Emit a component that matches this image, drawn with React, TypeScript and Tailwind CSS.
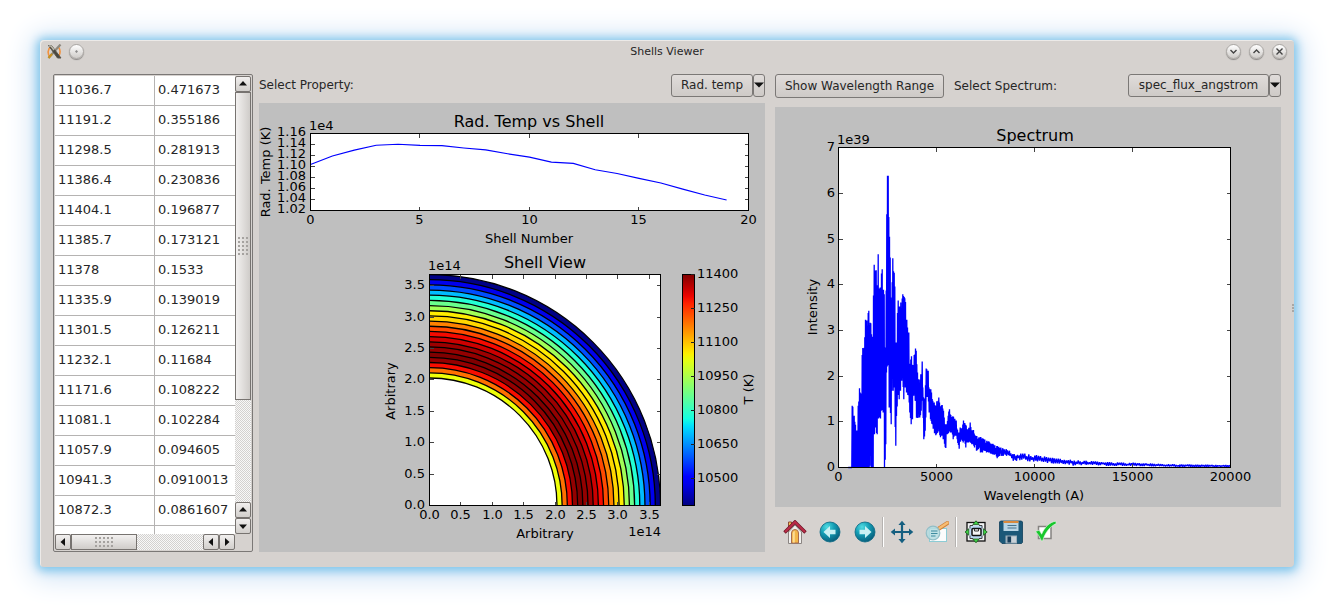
import type { ReactNode } from 'react';

const rows = [
  ['11036.7', '0.471673'],
  ['11191.2', '0.355186'],
  ['11298.5', '0.281913'],
  ['11386.4', '0.230836'],
  ['11404.1', '0.196877'],
  ['11385.7', '0.173121'],
  ['11378', '0.1533'],
  ['11335.9', '0.139019'],
  ['11301.5', '0.126211'],
  ['11232.1', '0.11684'],
  ['11171.6', '0.108222'],
  ['11081.1', '0.102284'],
  ['11057.9', '0.094605'],
  ['10941.3', '0.0910013'],
  ['10872.3', '0.0861607'],
];

const temps = [...rows.map((r) => Number(r[0])), 10785, 10700, 10590, 10482, 10391];

// [bin, low, high]: bins are 17 angstrom wide, 137 flux units make 1e39
const flux = [
  [29, 0, 0], [40, 0, 0], [41, 0, 185], [43, 0, 182], [47, 0, 155], [51, 0, 128], [54, 0, 112], [57, 0, 110],
  [59, 0, 185], [63, 0, 238], [67, 0, 222], [70, 0, 315], [72, 0, 360], [75, 0, 356], [78, 0, 365], [81, 0, 443],
  [85, 0, 441], [88, 0, 460], [91, 0, 470], [94, 5, 435], [96, 35, 434], [98, 0, 432], [101, 0, 335], [104, 0, 470],
  [107, 90, 608], [110, 120, 590], [113, 105, 592], [116, 100, 500], [119, 145, 640], [122, 150, 535],
  [125, 135, 540], [128, 170, 575], [131, 175, 595], [134, 165, 540], [137, 0, 520], [139, 0, 360], [142, 70, 360],
  [144, 285, 702], [147, 300, 875], [149, 370, 875], [152, 180, 695], [154, 180, 690], [157, 80, 510],
  [160, 230, 520], [163, 225, 628], [166, 240, 605], [169, 150, 543], [172, 65, 375], [175, 160, 375],
  [178, 230, 508], [182, 205, 480], [186, 230, 493], [190, 260, 500], [193, 260, 520], [196, 205, 512],
  [200, 240, 510], [204, 225, 455], [207, 220, 420], [211, 210, 405], [214, 165, 300], [218, 130, 345],
  [222, 145, 300], [226, 215, 330], [230, 200, 360], [233, 150, 350], [237, 148, 285], [241, 150, 265],
  [244, 150, 255], [247, 155, 280], [250, 200, 357], [253, 180, 240], [256, 85, 210], [259, 90, 200],
  [262, 150, 298], [265, 210, 295], [269, 215, 290], [272, 165, 235], [276, 145, 240], [279, 135, 225],
  [283, 120, 200], [287, 105, 195], [291, 95, 185], [294, 100, 200], [298, 105, 195], [301, 115, 210],
  [305, 90, 180], [310, 95, 190], [314, 85, 180], [317, 80, 150], [321, 45, 130], [325, 100, 130], [329, 100, 155],
  [332, 110, 180], [336, 105, 160], [340, 105, 150], [344, 85, 155], [348, 95, 145], [352, 95, 150], [356, 85, 115],
  [361, 50, 105], [365, 75, 120], [369, 85, 118], [374, 75, 143], [378, 80, 135], [382, 60, 130], [386, 75, 115],
  [390, 75, 115], [395, 75, 135], [400, 70, 110], [404, 70, 118], [408, 60, 97], [414, 50, 95], [420, 55, 90],
  [426, 45, 92], [432, 45, 88], [438, 50, 85], [444, 45, 80], [450, 45, 80], [456, 42, 72], [462, 40, 72],
  [468, 38, 67], [476, 28, 65], [484, 35, 60], [494, 35, 58], [504, 35, 55], [514, 35, 50], [524, 20, 42],
  [534, 20, 42], [544, 22, 44], [559, 20, 42], [574, 18, 39], [594, 16, 37], [618, 15, 33], [644, 12, 29],
  [674, 11, 26], [704, 6, 22], [744, 8, 20], [804, 5, 16], [884, 5, 14], [924, 4, 12], [1024, 2, 9], [1176, 2, 7],
];

function spectrumPath() {
  let seed = 7;
  const rand = () => {
    seed = (seed * 16807) % 2147483647;
    return seed / 2147483647;
  };
  const pts: string[] = [];
  let up = false;
  for (let i = 0; i < flux.length - 1; i++) {
    const [b0, lo0, hi0] = flux[i];
    const [b1, lo1, hi1] = flux[i + 1];
    const step = b0 < 480 ? 1 : 3;
    for (let b = b0; b < b1; b += step) {
      const t = (b - b0) / (b1 - b0);
      const lo = lo0 + (lo1 - lo0) * t;
      const hi = hi0 + (hi1 - hi0) * t;
      const slack = b - b0 < 2 ? 0 : rand() * rand() * 0.5 * (hi - lo);
      up = !up;
      const v = up ? hi - slack : lo + (b0 < 100 ? 0 : slack);
      pts.push(`${(63.5 + b / 3).toFixed(1)},${(360.5 - v / 3).toFixed(1)}`);
    }
  }
  return pts.join(' ');
}

function ramp(stops: number[][], v: number) {
  for (let i = 1; i < stops.length; i++) {
    const [x0, y0] = stops[i - 1];
    const [x1, y1] = stops[i];
    if (v <= x1) return Math.round(255 * (y0 + ((y1 - y0) * (v - x0)) / (x1 - x0)));
  }
  return Math.round(255 * stops[stops.length - 1][1]);
}

function jet(value: number) {
  const v = Math.min(1, Math.max(0, value));
  const r = ramp([[0, 0], [0.35, 0], [0.66, 1], [0.89, 1], [1, 0.5]], v);
  const g = ramp([[0, 0], [0.125, 0], [0.375, 1], [0.64, 1], [0.91, 0], [1, 0]], v);
  const b = ramp([[0, 0.5], [0.11, 1], [0.34, 1], [0.65, 0], [1, 0]], v);
  return `rgb(${r},${g},${b})`;
}

type AxesProps = { x: number; y: number; w: number; h: number; xt: number[]; yt: number[] };

function Axes({ x, y, w, h, xt, yt }: AxesProps) {
  return (
    <g shapeRendering="crispEdges" fill="none">
      <g stroke="#444">
        {xt.map((t) => (
          <path key={t} d={`M${t} ${y}v4M${t} ${y + h}v-4`} />
        ))}
        {yt.map((t) => (
          <path key={t} d={`M${x} ${t}h4M${x + w} ${t}h-4`} />
        ))}
      </g>
      <rect x={x} y={y} width={w} height={h} stroke="#000" />
    </g>
  );
}

function ShellPlots() {
  const lineX = [51.5, 160.5, 270.5, 379.5, 489.5];
  const lineY = [30, 41, 52, 63, 74, 85, 96, 107].map((v) => v + 0.5);
  const line = temps.map((t, i) => `${51.5 + i * 21.9},${30.5 + ((11600 - t) / 1400) * 77}`).join(' ');
  const viewX = [0, 1, 2, 3, 4, 5, 6, 7].map((i) => Math.round(170 + i * 31.4) + 0.5);
  const viewY = [0, 1, 2, 3, 4, 5, 6, 7].map((i) => Math.round(402 - i * 31.4) + 0.5);
  const step = (231 - 127.5) / 20;
  const min = 10385;
  const span = 11404 - min;

  return (
    <svg viewBox="0 0 506 449" className="block h-auto w-full bg-[#bfbfbf] text-[13px]" role="img" aria-label="Shell plots">
      <defs>
        <clipPath id="quarter">
          <rect x="170" y="171" width="232" height="232" />
        </clipPath>
        <linearGradient id="jet" x1="0" y1="1" x2="0" y2="0">
          {Array.from({ length: 33 }, (_, i) => (
            <stop key={i} offset={i / 32} stopColor={jet(i / 32)} />
          ))}
        </linearGradient>
      </defs>

      <text x="270" y="24" textAnchor="middle" className="text-[16px]">Rad. Temp vs Shell</text>
      <text x="50" y="27">1e4</text>
      <rect x="51" y="30" width="439" height="78" fill="#fff" />
      <polyline points={line} fill="none" stroke="#00f" strokeWidth="1.2" />
      <Axes x={51.5} y={30.5} w={438} h={77} xt={lineX} yt={lineY} />
      {['1.16', '1.14', '1.12', '1.10', '1.08', '1.06', '1.04', '1.02'].map((s, i) => (
        <text key={s} x="47" y={33 + i * 11} textAnchor="end">{s}</text>
      ))}
      {[0, 5, 10, 15, 20].map((n, i) => (
        <text key={n} x={lineX[i]} y="121" textAnchor="middle">{n}</text>
      ))}
      <text x="270" y="140" textAnchor="middle">Shell Number</text>
      <text transform="translate(11 69) rotate(-90)" textAnchor="middle">Rad. Temp (K)</text>

      <text x="286" y="165" textAnchor="middle" className="text-[16px]">Shell View</text>
      <text x="169" y="167">1e14</text>
      <rect x="170" y="171" width="232" height="232" fill="#fff" />
      <g clipPath="url(#quarter)" stroke="#000" strokeWidth="1.3">
        {temps.map((_, i) => {
          const n = 19 - i;
          return (
            <circle key={n} cx="170.5" cy="402.5" r={127.5 + (n + 1) * step} fill={jet((temps[n] - min) / span)} />
          );
        })}
        <circle cx="170.5" cy="402.5" r="127.5" fill="#fff" />
      </g>
      <Axes x={170.5} y={171.5} w={231} h={231} xt={viewX} yt={viewY} />
      {['0.0', '0.5', '1.0', '1.5', '2.0', '2.5', '3.0', '3.5'].map((s, i) => (
        <g key={s}>
          <text x={viewX[i]} y="416" textAnchor="middle">{s}</text>
          <text x="166" y={viewY[i] + 3} textAnchor="end">{s}</text>
        </g>
      ))}
      <text x="286" y="435" textAnchor="middle">Arbitrary</text>
      <text x="402" y="433" textAnchor="end">1e14</text>
      <text transform="translate(136 288) rotate(-90)" textAnchor="middle">Arbitrary</text>

      <rect x="423.5" y="171.5" width="12" height="231" fill="url(#jet)" stroke="#000" shapeRendering="crispEdges" />
      {[11400, 11250, 11100, 10950, 10800, 10650, 10500].map((n, i) => (
        <g key={n}>
          <path d={`M432 ${171.5 + i * 34}h4`} stroke="#222" shapeRendering="crispEdges" />
          <text x="438" y={175 + i * 34}>{n}</text>
        </g>
      ))}
      <text transform="translate(494 286) rotate(-90)" textAnchor="middle">T (K)</text>
    </svg>
  );
}

function SpectrumPlot() {
  const xt = [63.5, 161.5, 259.5, 357.5, 455.5];
  const yt = [0, 1, 2, 3, 4, 5, 6, 7].map((i) => Math.round(360 - i * 45.7) + 0.5);

  return (
    <svg viewBox="0 0 506 400" className="block h-auto w-full bg-[#bfbfbf] text-[13px]" role="img" aria-label="Spectrum plot">
      <text x="260" y="34" textAnchor="middle" className="text-[16px]">Spectrum</text>
      <text x="62" y="37">1e39</text>
      <rect x="63" y="40" width="393" height="321" fill="#fff" />
      <polyline points={spectrumPath()} fill="none" stroke="#00f" strokeWidth="1.3" strokeLinejoin="bevel" />
      <Axes x={63.5} y={40.5} w={392} h={320} xt={xt} yt={yt} />
      {xt.map((x, i) => (
        <text key={x} x={x} y="374" textAnchor="middle">{i * 5000}</text>
      ))}
      {yt.map((y, i) => (
        <text key={y} x="60" y={y + 3} textAnchor="end">{i}</text>
      ))}
      <text x="259" y="393" textAnchor="middle">Wavelength (A)</text>
      <text transform="translate(42 200) rotate(-90)" textAnchor="middle">Intensity</text>
    </svg>
  );
}

const arrows = {
  up: 'M4 9.5h8L8 5z',
  down: 'M4 6.5h8L8 11z',
  left: 'M10 4v8L5.5 8z',
  right: 'M6 4v8L10.5 8z',
};

function ScrollButton({ dir, label }: { dir: keyof typeof arrows; label: string }) {
  return (
    <button
      aria-label={label}
      className="size-4 shrink-0 rounded-xs border border-[#777370] bg-gradient-to-b from-[#f1efee] to-[#d2cfcc]"
    >
      <svg viewBox="1 1 14 14" className="block size-3.5">
        <path d={arrows[dir]} fill="#111" />
      </svg>
    </button>
  );
}

const trough = 'bg-[repeating-conic-gradient(#d3d1cf_0_25%,#f8f8f8_0_50%)] bg-[length:2px_2px]';
const gripDots = 'bg-[radial-gradient(#a5a29f_1px,transparent_1px)] bg-[length:4px_4px]';

function ShellTable() {
  return (
    <div className="flex w-[200px] shrink-0 flex-col rounded-xs border border-[#7b7876] p-px">
      <div className="flex grow">
        <div className="grow bg-white">
          <table className="w-full table-fixed border-separate border-spacing-0 text-[13px] text-[#262626]">
            <colgroup>
              <col className="w-[100px]" />
              <col />
            </colgroup>
            <tbody>
              {rows.map(([t, w]) => (
                <tr key={t} className="h-[30px]">
                  <td className="border-r border-b border-[#b5b3b2] p-0 pb-[2px] pl-[3px]">{t}</td>
                  <td className="border-b border-[#b5b3b2] p-0 pb-[2px] pl-[3px]">{w}</td>
                </tr>
              ))}
              <tr className="h-2">
                <td className="border-r border-[#b5b3b2] p-0" />
                <td className="p-0" />
              </tr>
            </tbody>
          </table>
        </div>
        <div className="flex w-4 shrink-0 flex-col">
          <ScrollButton dir="up" label="Scroll up" />
          <div className={`flex grow flex-col ${trough}`}>
            <div className="flex h-3/4 items-center justify-center border border-[#777370] bg-gradient-to-r from-[#f3f1f0] to-[#cfccc9]">
              <div className={`h-5 w-3 ${gripDots}`} />
            </div>
          </div>
          <ScrollButton dir="up" label="Scroll up one row" />
          <ScrollButton dir="down" label="Scroll down" />
        </div>
      </div>
      <div className="flex h-4 pr-4">
        <ScrollButton dir="left" label="Scroll left" />
        <div className={`flex grow ${trough}`}>
          <div className="flex w-1/2 items-center justify-center border border-[#777370] bg-gradient-to-b from-[#f3f1f0] to-[#cfccc9]">
            <div className={`h-3 w-5 ${gripDots}`} />
          </div>
        </div>
        <ScrollButton dir="left" label="Scroll left one column" />
        <ScrollButton dir="right" label="Scroll right" />
      </div>
    </div>
  );
}

const raised = 'border border-[#7b7876] bg-gradient-to-b from-[#e0dcda] to-[#cecac7]';

function Picker({ id, value, wide }: { id: string; value: string; wide?: boolean }) {
  return (
    <div className="ml-auto flex h-[23px]">
      <select
        id={id}
        defaultValue={value}
        className={`appearance-none rounded-[3px] px-2 pb-[2px] text-center text-[12px] text-[#262626] ${raised} ${wide ? 'w-[141px]' : 'w-[82px]'}`}
      >
        <option>{value}</option>
      </select>
      <button aria-label="Open list" className={`flex w-3 items-center justify-center rounded-[3px] pb-[2px] ${raised}`}>
        <svg viewBox="0 0 10 6" className="block h-[6px] w-[10px] shrink-0">
          <path d="M0 0.5h10L5 5.5z" fill="#111" />
        </svg>
      </button>
    </div>
  );
}

function RoundButton({ label, children }: { label: string; children: ReactNode }) {
  return (
    <button
      aria-label={label}
      className="size-[15px] rounded-full border border-[#aaa7a4] bg-gradient-to-b from-white to-[#cfccc9] shadow-[0_1px_1px_#8a8785]"
    >
      <svg viewBox="0 0 13 13" className="block" fill="none" stroke="#444" strokeWidth="1.4">
        {children}
      </svg>
    </button>
  );
}

function Tool({ label, children }: { label: string; children: ReactNode }) {
  return (
    <button aria-label={label} className="flex h-8 w-[35px] items-center justify-center">
      <svg viewBox="0 0 24 24" className="size-6" fill="none">
        {children}
      </svg>
    </button>
  );
}

function Separator() {
  return <div className="h-[30px] w-[2px] border-r border-r-white bg-[#b5b2b0]" />;
}

function Toolbar() {
  return (
    <div className="flex grow items-center pt-1 pl-[2px]">
      <Tool label="Home">
        <path d="M5.5 12V2h3v5" fill="#f6c44e" stroke="#8d4a38" />
        <path d="M5.5 12L12 5l6.5 7v11.5h-13z" fill="#f1f0ee" stroke="#8b8582" />
        <path d="M8.5 23V13a3.5 3.5 0 0 1 7 0v10z" fill="#f3b649" stroke="#a96b4c" />
        <path d="M9.8 22.5V13a2.2 2.2 0 0 1 2-2v11.5z" fill="#fbdc95" />
        <path d="M1.5 12.5L12 2l10.5 10.5" stroke="#6b1626" strokeWidth="3.4" />
        <path d="M2 12L12 2l10 10" stroke="#bb2c48" strokeWidth="2" />
      </Tool>
      <Tool label="Back">
        <circle cx="12" cy="12" r="10" fill="url(#ball)" stroke="#086783" strokeWidth="0.8" />
        <path d="M5.500 12L12 6v3.700h5.500v4.600H12V18z" fill="#c9f1f4" />
      </Tool>
      <Tool label="Forward">
        <circle cx="12" cy="12" r="10" fill="url(#ball)" stroke="#086783" strokeWidth="0.8" />
        <path d="M18.500 12L12 6v3.700H6.500v4.600H12V18z" fill="#c9f1f4" />
      </Tool>
      <Separator />
      <Tool label="Pan">
        <path d="M12 4v16M3 12h18" stroke="#155f80" strokeWidth="2.2" />
        <path
          d="M12 .8l3.600 4.300H8.400zM12 23.200l3.600-4.300H8.400zM.7 12L5 8.400v7.200zM23.300 12L19 8.400v7.200z"
          fill="#155f80"
        />
      </Tool>
      <Tool label="Zoom">
        <rect x="4.500" y="8.500" width="17" height="13" fill="#fbfcfc" stroke="#8dccd5" />
        <path d="M14 8.500L22.500 3" stroke="#cf8138" strokeWidth="4" strokeLinecap="round" />
        <path d="M14.500 8L22.500 2.800" stroke="#f8bd73" strokeWidth="2.400" strokeLinecap="round" />
        <circle cx="8" cy="13" r="6.800" fill="#b4dce0" fillOpacity="0.85" stroke="#91bec7" strokeWidth="1.2" />
        <path d="M6 11h6.500M6 13.500h6.500M6 16h4.500" stroke="#3e8ca0" strokeWidth="1.1" />
      </Tool>
      <div className="mx-px">
        <Separator />
      </div>
      <Tool label="Configure subplots">
        <rect x="3" y="2.500" width="18" height="18.500" fill="#f3f4f4" stroke="#111" strokeWidth="1.3" />
        <rect x="5.500" y="5.500" width="13" height="13" fill="#b9d6f2" />
        <path d="M6 8.500v-3h3M15 5.500h3v3M6 15.500v3h3M15 18.500h3v-3" stroke="#444" />
        <rect x="8" y="8.500" width="9" height="7" rx="1" fill="#f5f5f5" stroke="#111" strokeWidth="1.5" />
        <path d="M10.500 9v2h4V9" stroke="#333" />
        <path
          d="M12 .8l3.200 3.800H8.800zM12 22.800l3.200-3.800H8.800zM1 12l3.800-3.200v6.400zM23.200 12l-3.800-3.200v6.400z"
          fill="#3fd246"
          stroke="#17531b"
          strokeWidth="0.8"
        />
      </Tool>
      <Tool label="Save">
        <path d="M1.500 1h21l1 1v20.500l-1 1H3L.5 21V2z" fill="#1b5878" stroke="#103f5a" strokeWidth="0.8" />
        <rect x="4.500" y="1.500" width="15" height="9.500" fill="#b9d5e4" />
        <rect x="4.500" y="1" width="15" height="2" fill="#d98a3d" />
        <path d="M8.500 5.500h9M8.500 8h9" stroke="#47738d" />
        <path d="M6.500 15.500h11.500v8H6.500z" fill="#9eafba" />
        <rect x="8.500" y="16.500" width="3.500" height="6" fill="#173d5a" />
        <path d="M12.500 22.500v-6h4.500v6z" fill="#c8d1d7" />
      </Tool>
      <Tool label="Edit parameters">
        <rect x="4.500" y="6.500" width="12.500" height="12" fill="#fff" stroke="#858280" strokeWidth="1.5" />
        <path
          d="M1.500 11.500L5 10.200C6 11.200 7 12.800 7.600 14.200 10.500 7.500 15.500 2 21.800 1.200L22.200 3.600C16 6.500 11.500 12 8.500 21H7.500C6 17.500 4.200 14.200 1.500 11.500z"
          fill="#17c72c"
          stroke="#e4f5e4"
          strokeWidth="0.6"
        />
      </Tool>
    </div>
  );
}

export default function App() {
  return (
    <div className="flex min-h-screen bg-white p-10 font-['DejaVu_Sans',sans-serif] text-[12px] text-[#262626]">
      <svg className="absolute size-0" aria-hidden="true">
        <defs>
          <radialGradient id="ball" cx="0.35" cy="0.25" r="0.8">
            <stop offset="0" stopColor="#51dce2" />
            <stop offset="0.45" stopColor="#139db4" />
            <stop offset="1" stopColor="#075a78" />
          </radialGradient>
        </defs>
      </svg>
      <div className="relative flex min-w-0 grow flex-col rounded-[4px] bg-[#d6d2cf] shadow-[inset_1px_1px_0_#eceae8,0_1px_10px_3px_#7fc6eb,0_3px_28px_8px_#cfe1f5]">
        <header className="flex h-[22px] items-center px-[7px]">
          <div className="flex flex-1 items-center gap-[7px]">
            <svg viewBox="0 0 15 15" className="size-[15px]" fill="none">
              <path d="M4 2.5C.5 5 .3 10 3 13M11.500 3c2 3 2 6.500 0 9.500" stroke="#f2913d" strokeWidth="1.6" />
              <path d="M13.500.5L9 5.500 1.500 14" stroke="#8d897f" strokeWidth="2.200" />
              <path d="M1.500 1.500h3L14 14h-3.500z" fill="#4a473f" stroke="#5b574e" />
              <path d="M2 2h2l3 4" stroke="#bbb8aa" strokeWidth="1.5" />
              <path d="M1.500 14L5 10" stroke="#c9921d" strokeWidth="2" />
            </svg>
            <RoundButton label="Keep on all desktops">
              <circle cx="6.500" cy="6.500" r="0.3" />
            </RoundButton>
          </div>
          <h1 className="pt-[2px] text-[11px]">Shells Viewer</h1>
          <div className="flex flex-1 items-center justify-end gap-2">
            <RoundButton label="Minimize">
              <path d="M3.500 5l3 3 3-3" />
            </RoundButton>
            <RoundButton label="Maximize">
              <path d="M3.500 8l3-3 3 3" />
            </RoundButton>
            <RoundButton label="Close">
              <path d="M3.500 3.500l6 6M9.500 3.500l-6 6" />
            </RoundButton>
          </div>
        </header>

        <main className="flex grow px-[13px] pt-3 pb-[15px]">
          <ShellTable />
          <section className="ml-[6px] flex min-w-0 flex-1 flex-col">
            <div className="mb-[6px] flex h-[23px] items-center">
              <label htmlFor="property" className="pb-[2px]">Select Property:</label>
              <Picker id="property" value="Rad. temp" />
            </div>
            <ShellPlots />
          </section>
          <section className="ml-[10px] flex min-w-0 flex-1 flex-col">
            <div className="mb-[9px] flex h-6 items-start">
              <button className={`h-6 w-[169px] rounded-[3px] ${raised}`}>Show Wavelength Range</button>
              <label htmlFor="spectrum" className="ml-[10px] leading-6">Select Spectrum:</label>
              <Picker id="spectrum" value="spec_flux_angstrom" wide />
            </div>
            <SpectrumPlot />
            <Toolbar />
          </section>
        </main>
        <div className="absolute top-1/2 right-0 h-2 w-[2px] border-r-2 border-dotted border-[#aaa7a4]" />
      </div>
    </div>
  );
}
